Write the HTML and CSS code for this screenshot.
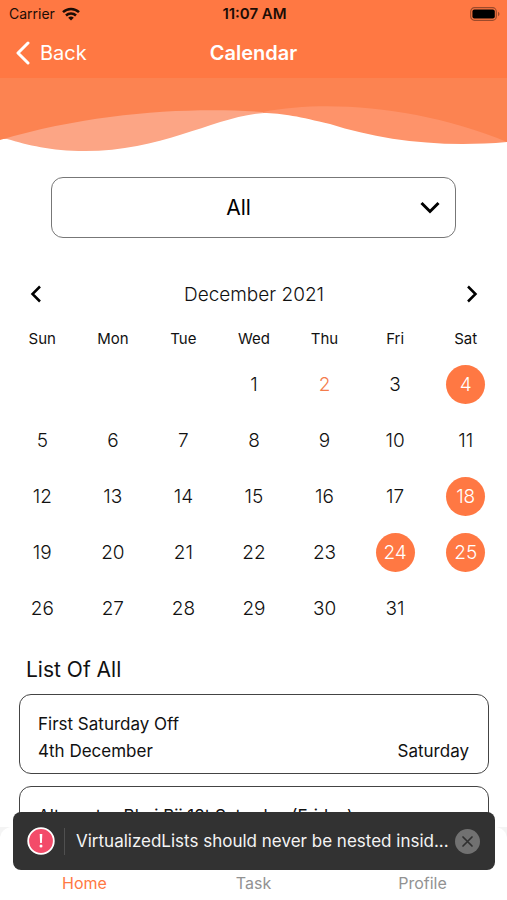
FILE: index.html
```html
<!DOCTYPE html>
<html lang="en">
<head>
<meta charset="utf-8">
<meta name="viewport" content="width=device-width, initial-scale=1">
<title>Calendar</title>
<link rel="stylesheet" href="styles.css">
</head>
<body>
<div class="app">
  <header class="top">
    <div class="status">
      <span class="carrier">Carrier
        <svg width="18" height="14" viewBox="0 0 18 14" aria-hidden="true"><g fill="none" stroke="#1c0d06" stroke-width="2.5"><path d="M1 5.2a11.6 11.6 0 0 1 16 0"/><path d="M4 8.5a7.2 7.2 0 0 1 10 0"/></g><path d="M9 13.6 6.2 10.8a4 4 0 0 1 5.6 0z" fill="#1c0d06"/></svg>
      </span>
      <span class="time">11:07 AM</span>
      <svg class="battery" width="30" height="14" viewBox="0 0 30 14" aria-hidden="true"><rect x=".7" y=".7" width="25.6" height="12.6" rx="3.8" fill="none" stroke="#9c4a2b" stroke-width="1.2"/><rect x="2.4" y="2.4" width="22.4" height="9.2" rx="2" fill="#000"/><path d="M28 4.8c2 .8 2 3.6 0 4.4z" fill="#9c4a2b"/></svg>
    </div>
    <nav class="nav">
      <button class="back" type="button"><svg width="16" height="24" viewBox="0 0 16 24" aria-hidden="true"><path d="M13 2 3 12l10 10" fill="none" stroke="#fff" stroke-width="3" stroke-linecap="round" stroke-linejoin="round"/></svg>Back</button>
      <h1>Calendar</h1>
    </nav>
  </header>
  <svg class="wave" viewBox="0 0 507 74" preserveAspectRatio="none" aria-hidden="true">
    <path d="M0 0H264V35C215 38 165 73 85 73C50 73 28 67 7 61L0 61Z" fill="#fca585"/>
    <path d="M263 0H507V64C440 70 380 62 330 46C300 39 283 35 263 35Z" fill="#fe936a"/>
    <path d="M0 0H507V64C425 30 330 21 263 34C190 29 95 34 0 62Z" fill="#fc8351"/>
  </svg>
  <main>
    <div class="picker">
      <select aria-label="Category"><option>All</option></select>
      <svg width="20" height="13" viewBox="0 0 20 13" aria-hidden="true"><path d="m1.5 2 8.5 8.5L18.500 2" fill="none" stroke="#000" stroke-width="3"/></svg>
    </div>
    <section class="calendar">
      <div class="month">
        <button type="button" aria-label="Previous month"><svg width="12" height="18" viewBox="0 0 12 18" aria-hidden="true"><path d="M10 1.500 2.500 9l7.500 7.500" fill="none" stroke="#000" stroke-width="2.500"/></svg></button>
        <h2>December 2021</h2>
        <button type="button" aria-label="Next month"><svg width="12" height="18" viewBox="0 0 12 18" aria-hidden="true"><path d="M2 1.500 9.500 9 2 16.500" fill="none" stroke="#000" stroke-width="2.500"/></svg></button>
      </div>
      <table>
        <thead><tr><th>Sun</th><th>Mon</th><th>Tue</th><th>Wed</th><th>Thu</th><th>Fri</th><th>Sat</th></tr></thead>
        <tbody>
          <tr><td></td><td></td><td></td><td>1</td><td class="today">2</td><td>3</td><td><span class="off">4</span></td></tr>
          <tr><td>5</td><td>6</td><td>7</td><td>8</td><td>9</td><td>10</td><td>11</td></tr>
          <tr><td>12</td><td>13</td><td>14</td><td>15</td><td>16</td><td>17</td><td><span class="off">18</span></td></tr>
          <tr><td>19</td><td>20</td><td>21</td><td>22</td><td>23</td><td><span class="off">24</span></td><td><span class="off">25</span></td></tr>
          <tr><td>26</td><td>27</td><td>28</td><td>29</td><td>30</td><td>31</td><td></td></tr>
        </tbody>
      </table>
    </section>
    <section class="list">
      <h2>List Of All</h2>
      <article class="card"><p>First Saturday Off</p><p class="row"><span>4th December</span><span>Saturday</span></p></article>
      <article class="card"><p>Alternate- Bhai Bij 18t Saturday (Friday)</p></article>
    </section>
  </main>
  <div class="tabwrap">
    <nav class="tabs"><a class="active" href="#home">Home</a><a href="#task">Task</a><a href="#profile">Profile</a></nav>
  </div>
  <div class="toast" role="alert">
    <svg width="28" height="28" viewBox="0 0 28 28" aria-hidden="true"><circle cx="14" cy="14" r="12.800" fill="#f34b69" stroke="#fff" stroke-width="1.800"/><path d="M12.700 7h2.600l-.4 9h-1.800z" fill="#fff"/><circle cx="14" cy="19" r="1.500" fill="#fff"/></svg>
    <p>VirtualizedLists should never be nested insid...</p>
    <button type="button" aria-label="Dismiss"><svg width="25" height="25" viewBox="0 0 25 25" aria-hidden="true"><circle cx="12.500" cy="12.500" r="12.500" fill="#717171"/><path d="m8 8 9 9m0-9-9 9" stroke="#303030" stroke-width="1.700" stroke-linecap="round"/></svg></button>
  </div>
</div>
</body>
</html>
```
FILE: styles.css
```css
* { box-sizing: border-box; }
body, h1, h2, p { margin: 0; font-weight: 400; }
body { font-family: Inter, Roboto, sans-serif; color: #111; background: #fff; }
button { border: 0; padding: 0; background: none; font: inherit; color: inherit; }
svg { display: block; flex: none; }
.app { display: flex; flex-direction: column; height: 100vh; overflow: hidden; }
.top { background: #ff7843; flex: none; }
.status, .nav { display: grid; grid-template-columns: 1fr auto 1fr; align-items: center; }
.status { height: 27px; padding: 0 7px 0 9px; font-size: 14px; color: #1c0d06; }
.carrier { display: flex; align-items: center; gap: 7px; }
.time { font-size: 15px; font-weight: 600; }
.battery { justify-self: end; }
.nav { height: 51px; padding: 0 15px; color: #fff; font-size: 20px; }
.back { display: flex; align-items: center; gap: 9px; justify-self: start; }
.nav h1 { font-size: 20px; font-weight: 600; }
.wave { width: 100%; height: 74px; }
main { flex: 1; min-height: 0; overflow: hidden; }
.picker { width: 80%; margin: 25px auto 0; position: relative; }
.picker select { display: block; width: 100%; height: 61px; padding: 0 30px 0 0; border: 1px solid #777; border-radius: 12px; background: #fff; appearance: none; text-align: center; text-align-last: center; font: 21px Inter, Roboto, sans-serif; color: #000; }
.picker svg { position: absolute; right: 16px; top: 24px; pointer-events: none; }
.calendar { padding: 36px 6px 0 7px; }
.month { display: flex; align-items: center; justify-content: space-between; height: 40px; padding: 0 23px; }
.month h2 { font-size: 19px; font-weight: 300; }
table { width: 100%; table-layout: fixed; border-collapse: collapse; }
th { height: 42px; padding: 6px 0 0; font-size: 15px; font-weight: 400; }
td { height: 56px; padding: 0; text-align: center; font-size: 19px; font-weight: 300; }
.today { color: #f47c4c; }
.off { display: grid; place-items: center; width: 39px; height: 39px; margin: auto; border-radius: 50%; background: #ff7843; color: #fff; }
.list { padding: 20px 18px 0 19px; }
.list h2 { padding-left: 7px; margin-bottom: 10px; font-size: 21px; line-height: 28px; }
.card { margin-bottom: 12px; padding: 16px 19px 0 18px; height: 80px; border: 1px solid #444; border-radius: 12px; font-size: 17px; line-height: 27px; white-space: nowrap; }
.row { display: flex; justify-content: space-between; }
.tabwrap { flex: none; background: #f4f4f4; }
.tabs { display: grid; grid-template-columns: repeat(3, 1fr); height: 73px; padding-top: 45px; border-radius: 12px 12px 0 0; background: #fff; text-align: center; font-size: 16px; line-height: 22px; }
.tabs a { color: #929292; text-decoration: none; }
.tabs .active { color: #ff7843; }
.toast { position: fixed; left: 13px; right: 12px; bottom: 30px; height: 58px; padding: 0 15px 0 14px; display: flex; align-items: center; border-radius: 8px; background: #323232; color: #f4f4f4; }
.toast p { flex: 1; min-width: 0; margin: 0 4px 0 9px; padding-left: 11px; border-left: 1px solid #505050; font-size: 17px; line-height: 27px; overflow: hidden; white-space: nowrap; text-overflow: ellipsis; }
```
